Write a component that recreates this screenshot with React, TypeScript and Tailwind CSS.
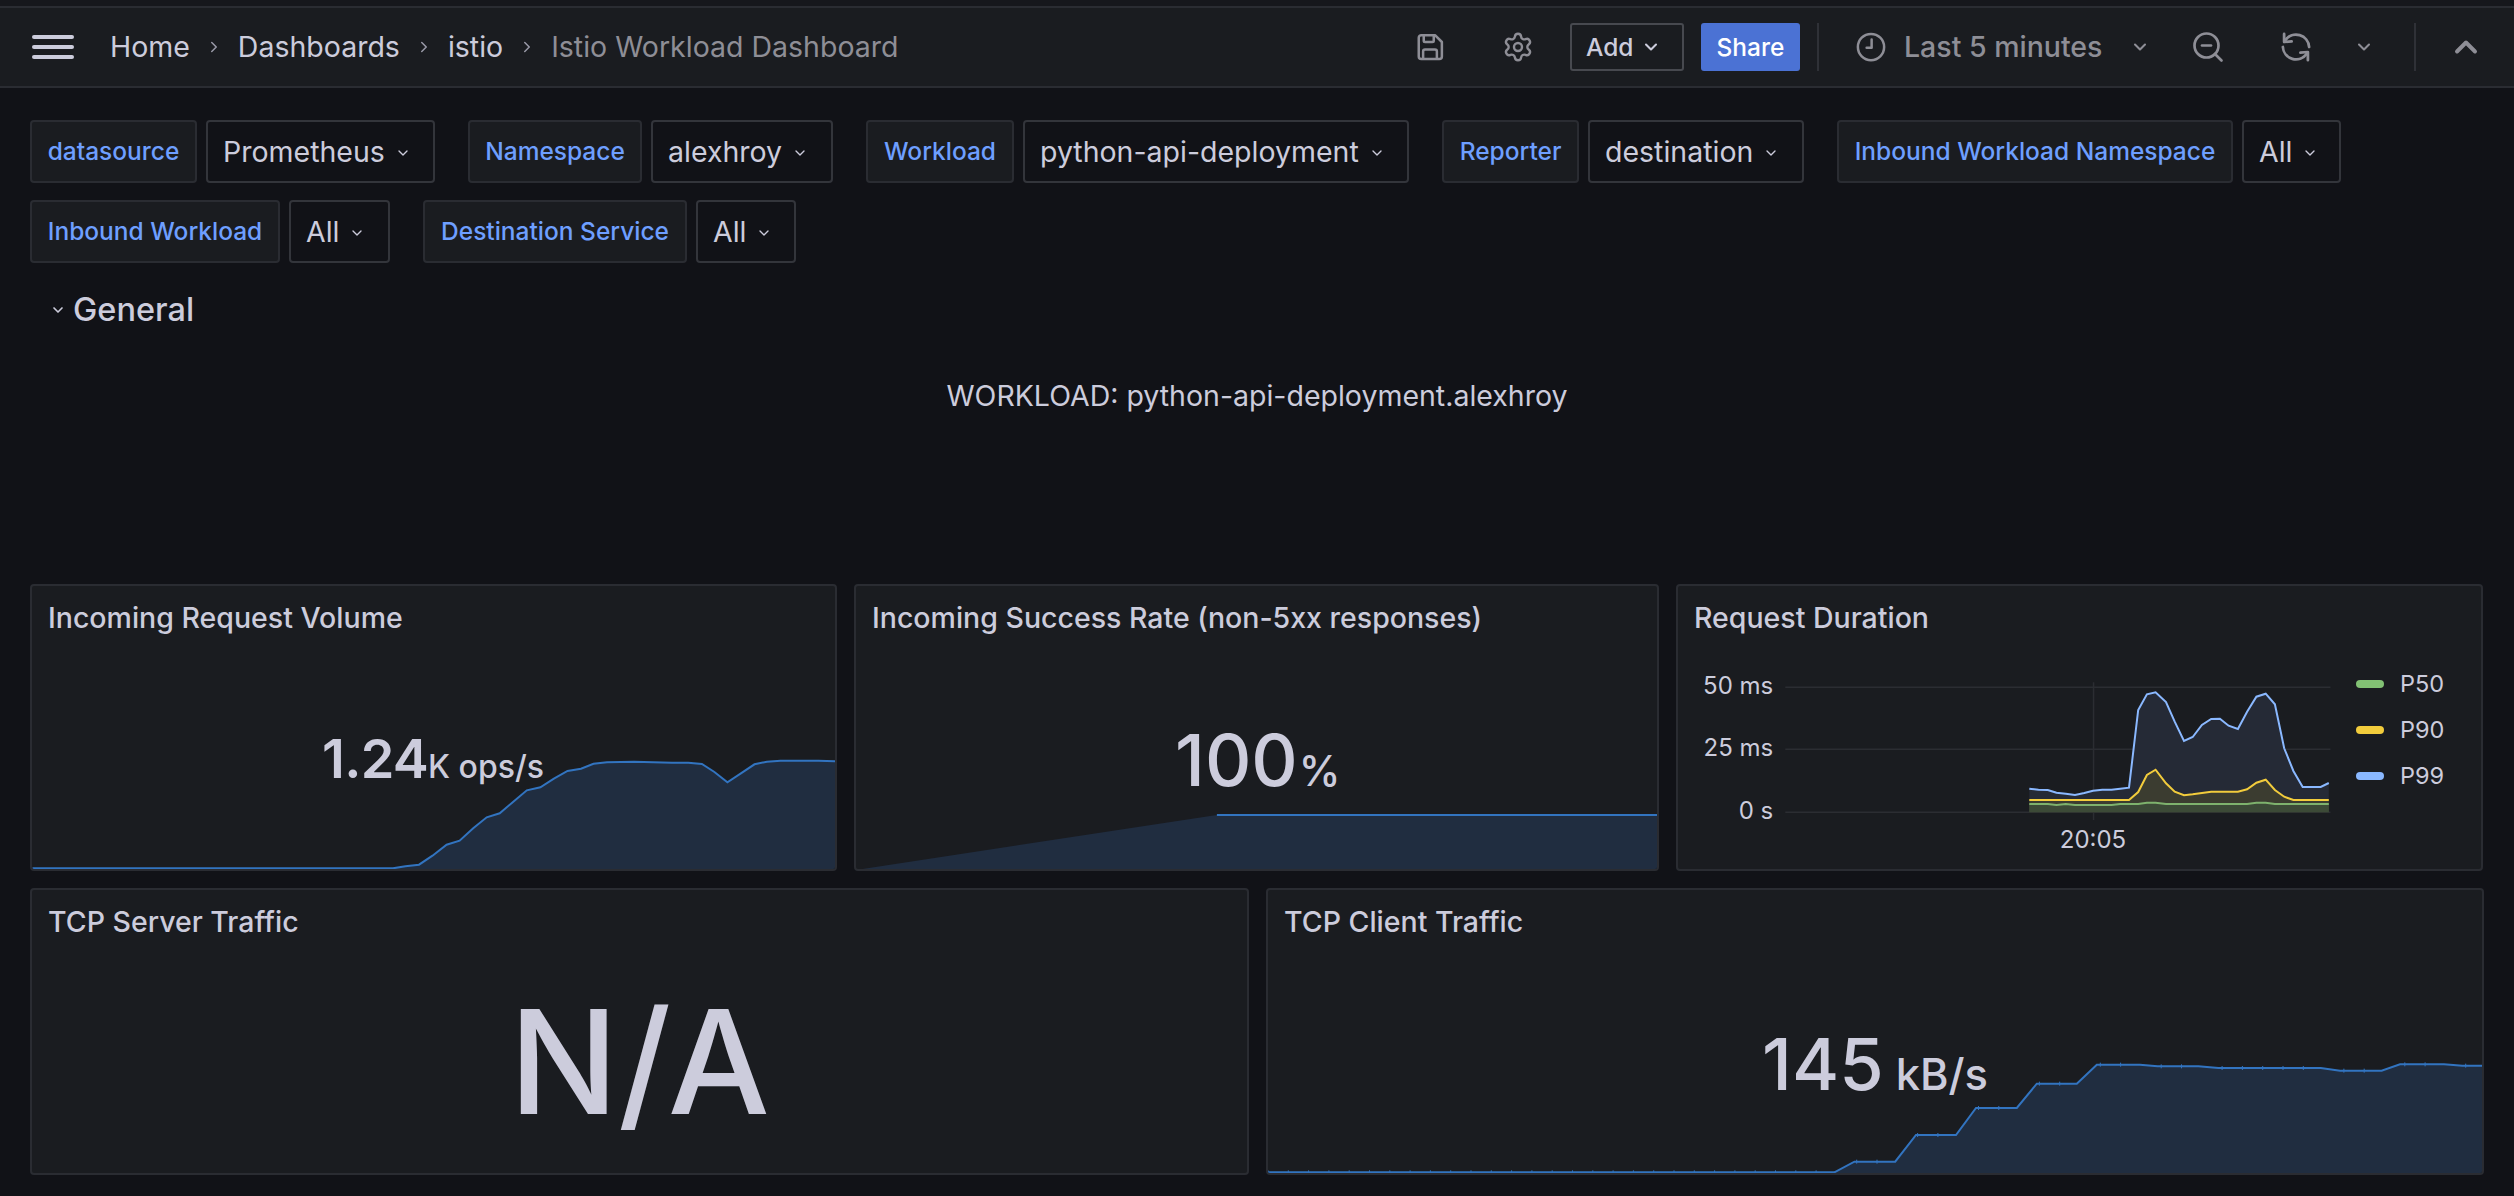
import { ChevronDown, ChevronRight, ChevronUp, Settings, ZoomOut } from "lucide-react";

type Pt = [number, number];
const path = (p: Pt[]) => p.map((q, i) => `${i ? "L" : "M"}${q[0].toFixed(1)} ${q[1].toFixed(1)}`).join(" ");

const Var = ({ label, value, lw, vw }: { label: string; value: string; lw: string; vw: string }) => (
  <div className="flex gap-[9px]">
    <div className={`${lw} h-[63px] flex items-center justify-center bg-[#1a1c20] border-2 border-[#2a2c32] rounded-[4px] text-[#6e9fff] text-[24.5px] font-medium whitespace-nowrap`}>{label}</div>
    <div className={`${vw} h-[63px] flex items-center pl-[15px] pt-[2px] gap-[10px] bg-[#111217] border-2 border-[#33353b] rounded-[4px] text-[#ccccdc] text-[28.5px] whitespace-nowrap`}>
      <span>{value}</span>
      <ChevronDown size={16} className="text-[#ccccdc]" />
    </div>
  </div>
);

const Panel = ({ title, className, children }: { title: string; className: string; children?: React.ReactNode }) => (
  <div className={`${className} relative bg-[#1a1c20] border-2 border-[#2a2c32] rounded-[4px] overflow-hidden`}>
    {children}
    <div className="absolute left-[16px] top-[16px] text-[28.5px] leading-[32px] font-medium text-[#ccccdc]">{title}</div>
  </div>
);

const tickPoints = (pts: Pt[], step: number): Pt[] => {
  const out: Pt[] = [];
  for (let i = 0; i < pts.length - 1; i++) {
    const [x0, y0] = pts[i];
    const [x1, y1] = pts[i + 1];
    if (y0 !== y1) continue;
    const first = Math.ceil(x0 / step) * step;
    for (let x = first; x <= x1; x += step) out.push([x, y0 + ((x - x0) / (x1 - x0)) * (y1 - y0)]);
  }
  return out;
};

const Spark = ({ w, h, pts, fillStart, ticks }: { w: number; h: number; pts: Pt[]; fillStart?: Pt[]; ticks?: number }) => {
  const line = path(pts);
  const start = fillStart ?? [[pts[0][0], h] as Pt];
  const area = path([...start, ...pts, [pts[pts.length - 1][0], h]]) + " Z";
  return (
    <svg className="absolute left-0 top-0" width={w} height={h} viewBox={`0 0 ${w} ${h}`}>
      <path d={area} fill="#202d40" />
      <path d={line} fill="none" stroke="#3274c0" strokeWidth="2" />
      {ticks ? tickPoints(pts, ticks).map(([x, y], i) => <line key={i} x1={x} x2={x} y1={y - 2} y2={y + 2} stroke="#3274c0" strokeWidth="1" />) : null}
    </svg>
  );
};

const vol: Pt[] = ([[60,895],[725,895],[748,889],[773,884],[798,857],[824,824],[848,812],[873,775],[898,742],[922,730],[947,695],[972,661],[997,652],[1022,626],[1047,603],[1072,596],[1095,581],[1120,577],[1170,575],[1240,578],[1270,578],[1295,582],[1318,606],[1342,637],[1367,610],[1392,583],[1415,575],[1440,572],[1510,572],[1545,574]] as Pt[]).map(([x, y]) => [x / 1.845 - 32, 570 + y / 3 - 586]);
const rate: Pt[] = ([[712,735],[1550,735]] as Pt[]).map(([x, y]) => [840 + x / 1.889 - 856, 570 + y / 3 - 586]);
const client: Pt[] = ([[10,877],[718,877],[743,845],[794,845],[820,765],[870,765],[895,684],[946,684],[971,611],[1021,611],[1046,554],[1100,554],[1122,559],[1173,559],[1198,564],[1326,564],[1350,572],[1402,572],[1425,553],[1480,553],[1503,557],[1530,557]] as Pt[]).map(([x, y]) => [1260 + x / 1.25 - 1268, 880 + y / 3 - 890]);

const tx = (z: number) => 1660 + z / 1.836 - 1678;
const ty = (z: number) => 570 + z / 3 - 586;
const mk = (a: number[][]): Pt[] => a.map(([x, y]) => [tx(x), ty(y)]);
const p99 = mk([[678,656],[695,659],[712,660],[728,668],[745,671],[762,675],[779,669],[795,662],[812,659],[829,659],[845,656],[861,653],[878,420],[894,373],[910,367],[929,396],[945,455],[962,513],[978,501],[995,465],[1012,447],[1028,446],[1044,467],[1061,477],[1078,425],[1095,380],[1112,371],[1129,403],[1146,535],[1163,603],[1180,651],[1213,651],[1228,639]]);
const p90 = mk([[678,690],[861,690],[878,666],[894,615],[910,599],[929,640],[945,665],[962,676],[978,673],[1012,665],[1061,665],[1078,658],[1095,638],[1112,629],[1129,660],[1146,680],[1163,690],[1228,690]]);
const p50 = mk([[678,702],[712,702],[728,705],[745,702],[762,705],[829,705],[845,702],[878,702],[894,698],[910,698],[929,702],[1078,702],[1095,698],[1112,698],[1129,702],[1228,702]]);
const base = ty(727);
const area = (p: Pt[]) => path([[p[0][0], base], ...p, [p[p.length - 1][0], base]]) + " Z";

const axis = "fill-[#ccccdc] text-[24px]";

const SaveIcon = () => (
  <svg width="30" height="30" viewBox="0 0 24 24" fill="none" stroke="currentColor" strokeWidth="2" strokeLinejoin="round" className="mr-[57px]">
    <path d="M5 2.5h11l5.5 5.5v11.5a2 2 0 0 1-2 2h-14.500a2 2 0 0 1-2-2v-15a2 2 0 0 1 2-2z" />
    <path d="M7 2.500v4.500a1 1 0 0 0 1 1h6a1 1 0 0 0 1-1v-4" />
    <path d="M6.500 21.500v-6a1.500 1.500 0 0 1 1.500-1.500h8a1.500 1.500 0 0 1 1.500 1.500v6" />
  </svg>
);

const ClockIcon = () => (
  <svg width="30" height="30" viewBox="0 0 24 24" fill="none" stroke="currentColor" strokeWidth="2" strokeLinecap="round" strokeLinejoin="round">
    <circle cx="12" cy="12" r="10.500" />
    <path d="M12.500 6v6.500h-4" />
  </svg>
);

const SyncIcon = () => (
  <svg width="30" height="30" viewBox="0 0 24 24" fill="none" stroke="currentColor" strokeWidth="2.200" strokeLinecap="round" strokeLinejoin="round" className="ml-[55px]">
    <path d="M3.500 6.500A10.500 10.500 0 0 1 22.500 12" />
    <path d="M2.500 1.500v6.500l6-.5" />
    <path d="M1.500 12A10.500 10.500 0 0 0 20.500 17.500" />
    <path d="M21.500 22.500v-6.500l-6 .5" />
  </svg>
);

export default function App() {
  return (
    <div className="w-[2514px] h-[1196px] overflow-hidden bg-[#111217] font-['Inter',sans-serif]">
      <div className="h-[6px] bg-[#16171c]" />
      <header className="h-[82px] border-y-2 border-[#2a2c32] bg-[#1a1c20] flex items-center text-[28.5px] pl-[32px] pr-[30px]">
        <div className="w-[42px] flex flex-col gap-[6px] mr-[36px]">
          <span className="h-[4px] rounded-full bg-[#ccccdc]" />
          <span className="h-[4px] rounded-full bg-[#ccccdc]" />
          <span className="h-[4px] rounded-full bg-[#ccccdc]" />
        </div>
        <nav className="flex items-center text-[#ccccdc]">
          <span>Home</span>
          <ChevronRight size={18} className="mx-[15px] text-[#9a9aa8]" />
          <span>Dashboards</span>
          <ChevronRight size={18} className="mx-[15px] text-[#9a9aa8]" />
          <span>istio</span>
          <ChevronRight size={18} className="mx-[15px] text-[#9a9aa8]" />
          <span className="text-[#8e8e96]">Istio Workload Dashboard</span>
        </nav>
        <div className="ml-auto flex items-center h-[48px] text-[#8e8e96]">
          <SaveIcon />
          <Settings size={32} strokeWidth={1.8} className="mr-[36px]" />
          <button className="h-[48px] w-[114px] flex items-center justify-start pl-[14px] gap-[8px] border-2 border-[#47494f] rounded-[3px] text-[#ccccdc] text-[24.5px] font-medium">Add<ChevronDown size={20} strokeWidth={2.5} /></button>
          <button className="h-[48px] w-[99px] ml-[17px] rounded-[3px] bg-[#4b72d4] text-white text-[24.5px] font-medium">Share</button>
          <span className="w-[2px] h-[48px] bg-[#2f3137] ml-[17px] mr-[37px]" />
          <ClockIcon />
          <span className="ml-[18px] w-[199px] whitespace-nowrap text-[#8e8e96] font-medium">Last 5 minutes</span>
          <ChevronDown size={20} strokeWidth={2.5} className="ml-[27px]" />
          <ZoomOut size={36} strokeWidth={1.8} className="ml-[40px]" />
          <SyncIcon />
          <ChevronDown size={20} strokeWidth={2.5} className="ml-[43px]" />
          <span className="w-[2px] h-[48px] bg-[#2f3137] ml-[40px] mr-[32px]" />
          <ChevronUp size={36} strokeWidth={2.6} />
        </div>
      </header>

      <div className="px-[30px] pt-[32px]">
        <div className="flex flex-col gap-[17px]">
          <div className="flex gap-[33px]">
            <Var label="datasource" value="Prometheus" lw="w-[167px]" vw="w-[229px]" />
            <Var label="Namespace" value="alexhroy" lw="w-[174px]" vw="w-[182px]" />
            <Var label="Workload" value="python-api-deployment" lw="w-[148px]" vw="w-[386px]" />
            <Var label="Reporter" value="destination" lw="w-[137px]" vw="w-[216px]" />
            <Var label="Inbound Workload Namespace" value="All" lw="w-[396px]" vw="w-[99px]" />
          </div>
          <div className="flex gap-[33px]">
            <Var label="Inbound Workload" value="All" lw="w-[250px]" vw="w-[101px]" />
            <Var label="Destination Service" value="All" lw="w-[264px]" vw="w-[100px]" />
          </div>
        </div>

        <div className="flex items-center h-[34px] mt-[30px] ml-[20px] gap-[7px] text-[#ccccdc] text-[32.5px] font-medium">
          <ChevronDown size={16} strokeWidth={2.5} />
          <span>General</span>
        </div>

        <div className="h-[257px] flex justify-center pt-[52px] text-[#ccccdc] text-[28.5px] leading-[34px]">WORKLOAD: python-api-deployment.alexhroy</div>

        <div className="flex gap-[17px] h-[287px] w-[2453px]">
          <Panel title="Incoming Request Volume" className="w-[807px]">
            <Spark w={804} h={284} pts={vol} />
            <div className="absolute left-[290px] top-[138px] flex items-baseline text-[#ccccdc] font-semibold">
              <span className="text-[54px] leading-[70px] tracking-[-0.7px]">1.24</span>
              <span className="text-[32px] font-medium">K ops/s</span>
            </div>
          </Panel>
          <Panel title="Incoming Success Rate (non-5xx responses)" className="w-[805px]">
            <Spark w={804} h={284} pts={rate} fillStart={[[0, 284]]} />
            <div className="absolute left-[319px] top-[130px] flex items-baseline text-[#ccccdc] font-medium">
              <span className="text-[72px] leading-[88px]">100</span>
              <span className="text-[42px] ml-[1px]">%</span>
            </div>
          </Panel>
          <Panel title="Request Duration" className="w-[807px]">
            <svg className="absolute left-0 top-0" width="660" height="284" viewBox="0 0 660 284">
              {[352, 538, 727].map((y) => (
                <line key={y} x1={tx(230)} x2={tx(1231)} y1={ty(y)} y2={ty(y)} stroke="#2b2d32" strokeWidth="1.5" />
              ))}
              <line x1={tx(796)} x2={tx(796)} y1={ty(337)} y2={ty(750)} stroke="#2b2d32" strokeWidth="1.5" />
              <path d={area(p99)} fill="#252a36" />
              <path d={area(p90)} fill="#3b3c30" />
              <path d={area(p50)} fill="#3c4a37" />
              <path d={path(p99)} fill="none" stroke="#8ab8ff" strokeWidth="2" />
              <path d={path(p90)} fill="none" stroke="#f2cc3c" strokeWidth="2" />
              <path d={path(p50)} fill="none" stroke="#7eb26d" strokeWidth="2" />
              <text x={tx(208)} y={ty(352) + 7} textAnchor="end" className={axis}>50 ms</text>
              <text x={tx(208)} y={ty(538) + 7} textAnchor="end" className={axis}>25 ms</text>
              <text x={tx(208)} y={ty(727) + 7} textAnchor="end" className={axis}>0 s</text>
              <text x={tx(795)} y={ty(810) + 8} textAnchor="middle" className={axis}>20:05</text>
            </svg>
            <div className="absolute left-[678px] top-[84px] flex flex-col gap-[18px] text-[23.5px] leading-[28px] text-[#ccccdc]">
              <div className="flex items-center gap-[16px]"><span className="w-[28px] h-[8px] rounded-full bg-[#82c174]" />P50</div>
              <div className="flex items-center gap-[16px]"><span className="w-[28px] h-[8px] rounded-full bg-[#f2cc3c]" />P90</div>
              <div className="flex items-center gap-[16px]"><span className="w-[28px] h-[8px] rounded-full bg-[#8ab8ff]" />P99</div>
            </div>
          </Panel>
        </div>

        <div className="flex gap-[17px] h-[287px] w-[2454px] mt-[17px]">
          <Panel title="TCP Server Traffic" className="w-[1219px]">
            <div className="absolute inset-0 flex items-center justify-center pt-[60px] text-[144px] font-medium text-[#ccccdc]">N/A</div>
          </Panel>
          <Panel title="TCP Client Traffic" className="w-[1218px]">
            <Spark w={1216} h={284} pts={client} ticks={20.3} />
            <div className="absolute left-[494px] top-[130px] flex items-baseline text-[#ccccdc] font-medium">
              <span className="text-[72px] leading-[88px]">145</span>
              <span className="text-[43.5px] ml-[12px]">kB/s</span>
            </div>
          </Panel>
        </div>
      </div>
    </div>
  );
}
